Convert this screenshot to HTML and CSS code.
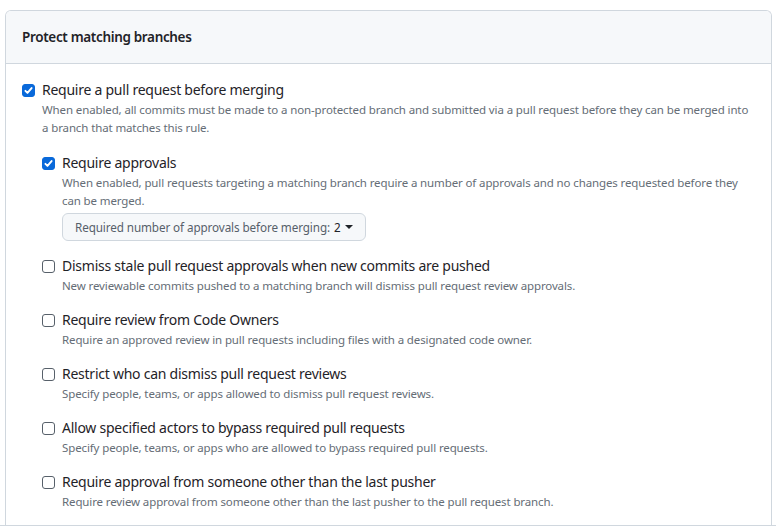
FILE: index.html
```html
<!DOCTYPE html>
<html lang="en">
<head>
<meta charset="utf-8">
<title>Branch protection</title>
<link rel="stylesheet" href="styles.css">
</head>
<body>
<section class="box">
  <header class="box-header">Protect matching branches</header>
  <div class="box-body">
    <div class="option">
      <span class="check checked"><svg viewBox="0 0 16 16"><path d="M3.5 8.5 6.5 11.5 12.5 4.5"/></svg></span>
      <div class="option-text">
        <div class="label">Require a pull request before merging</div>
        <p class="note">When enabled, all commits must be made to a non-protected branch and submitted via a pull request before they can be merged into a branch that matches this rule.</p>

        <div class="sub-list">
          <div class="option">
            <span class="check checked"><svg viewBox="0 0 16 16"><path d="M3.5 8.5 6.5 11.5 12.5 4.5"/></svg></span>
            <div class="option-text">
              <div class="label">Require approvals</div>
              <p class="note">When enabled, pull requests targeting a matching branch require a number of approvals and no changes requested before they can be merged.</p>
              <button class="select-btn" type="button">Required number of approvals before merging: <span class="value">2</span><span class="caret"></span></button>
            </div>
          </div>

          <div class="option">
            <span class="check"></span>
            <div class="option-text">
              <div class="label">Dismiss stale pull request approvals when new commits are pushed</div>
              <p class="note">New reviewable commits pushed to a matching branch will dismiss pull request review approvals.</p>
            </div>
          </div>

          <div class="option">
            <span class="check"></span>
            <div class="option-text">
              <div class="label">Require review from Code Owners</div>
              <p class="note">Require an approved review in pull requests including files with a designated code owner.</p>
            </div>
          </div>

          <div class="option">
            <span class="check"></span>
            <div class="option-text">
              <div class="label">Restrict who can dismiss pull request reviews</div>
              <p class="note">Specify people, teams, or apps allowed to dismiss pull request reviews.</p>
            </div>
          </div>

          <div class="option">
            <span class="check"></span>
            <div class="option-text">
              <div class="label">Allow specified actors to bypass required pull requests</div>
              <p class="note">Specify people, teams, or apps who are allowed to bypass required pull requests.</p>
            </div>
          </div>

          <div class="option">
            <span class="check"></span>
            <div class="option-text">
              <div class="label">Require approval from someone other than the last pusher</div>
              <p class="note">Require review approval from someone other than the last pusher to the pull request branch.</p>
            </div>
          </div>
        </div>
      </div>
    </div>
  </div>
</section>
<div class="rule"></div>
</body>
</html>
```

FILE: styles.css
```css
* { box-sizing: border-box; }

body {
  margin: 0;
  padding: 10px 4px 0 5px;
  background: #ffffff;
  font-family: "Noto Sans", "Open Sans", sans-serif;
  color: #1f2328;
  overflow: hidden;
}

.box {
  border: 1px solid #d0d7de;
  border-bottom: none;
  border-radius: 6px 6px 0 0;
  height: 515px;
  overflow: hidden;
}

.rule {
  height: 1px;
  margin: 0 -4px 0 -5px;
  background: #d0d7de;
}

.box-header {
  background: #f6f8fa;
  border-bottom: 1px solid #d0d7de;
  height: 53px;
  padding: 0 16px;
  display: flex;
  align-items: center;
  font-size: 13.5px;
  font-weight: 600;
  letter-spacing: -0.34px;
}

.box-body {
  padding: 16px 16px 0 16px;
}

.option {
  display: flex;
  align-items: flex-start;
  gap: 7px;
}

.check {
  flex: none;
  width: 13px;
  height: 13px;
  margin-top: 4px;
  border: 1px solid #57606a;
  border-radius: 3px;
  background: #ffffff;
  display: flex;
  align-items: center;
  justify-content: center;
}

.check.checked {
  background: #0969da;
  border-color: #0969da;
}

.check svg {
  width: 11px;
  height: 11px;
  fill: none;
  stroke: #ffffff;
  stroke-width: 2.8;
  stroke-linecap: round;
  stroke-linejoin: round;
}

.option-text {
  flex: 1;
  min-width: 0;
}

.label {
  font-size: 14px;
  line-height: 20px;
  letter-spacing: -0.25px;
}

.note {
  margin: 1px 0 0;
  font-size: 11.5px;
  line-height: 18px;
  color: #656d76;
  letter-spacing: -0.12px;
}

.sub-list {
  display: flex;
  flex-direction: column;
  gap: 15px;
  margin-top: 16px;
}

.select-btn {
  margin-top: 3px;
  height: 28px;
  padding: 0 12px;
  display: inline-flex;
  align-items: center;
  font-family: inherit;
  font-size: 11.7px;
  letter-spacing: -0.1px;
  color: #57606a;
  background: #f6f8fa;
  border: 1px solid #d0d7de;
  border-radius: 6px;
}

.select-btn .value {
  color: #1f2328;
  margin-left: 4px;
}

.caret {
  margin-left: 4px;
  width: 0;
  height: 0;
  border-left: 4px solid transparent;
  border-right: 4px solid transparent;
  border-top: 4px solid #1f2328;
}
```
